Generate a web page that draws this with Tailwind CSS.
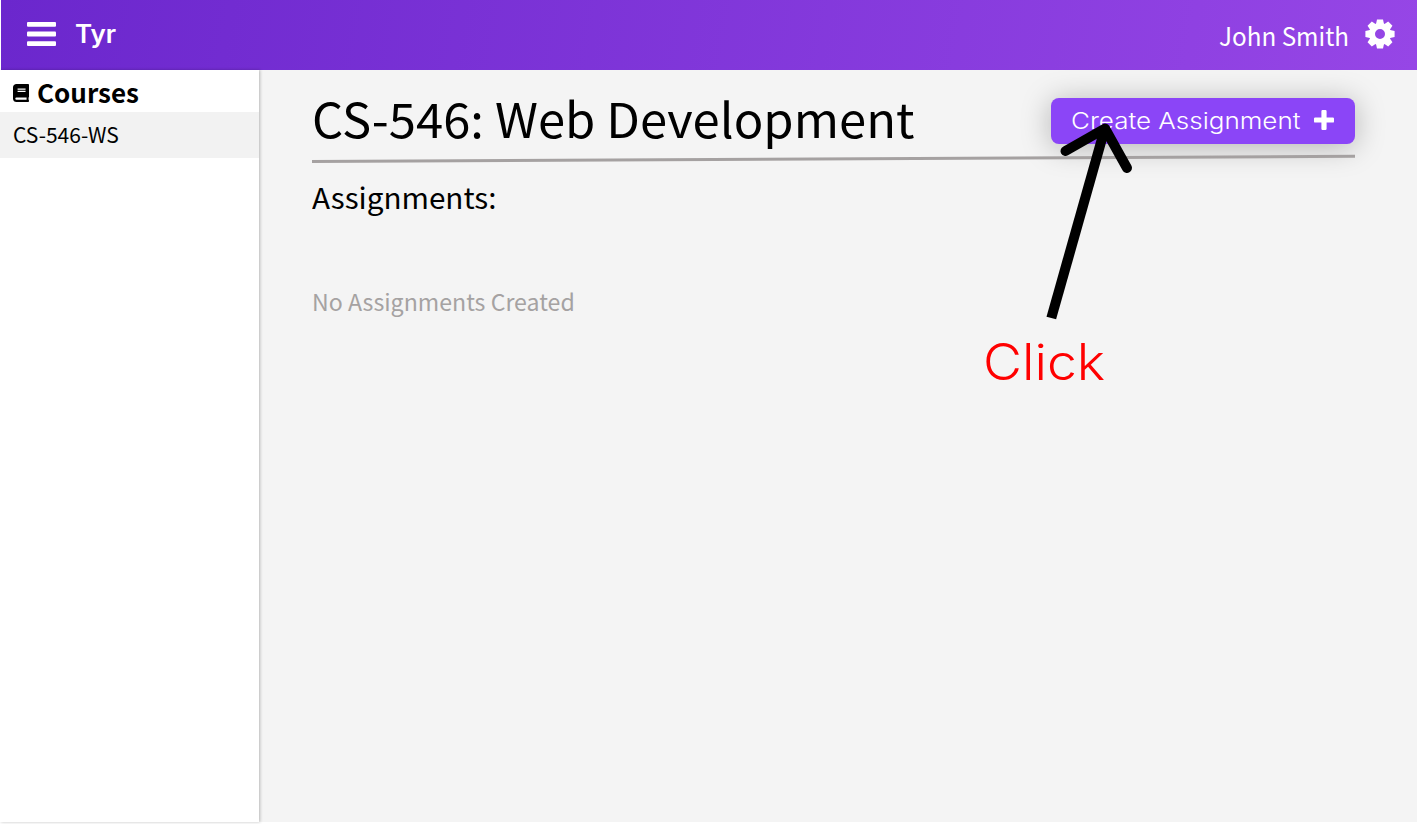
<!DOCTYPE html>
<html lang="en">
<head>
<meta charset="utf-8">
<title>Tyr</title>
<script src="https://cdn.jsdelivr.net/npm/@tailwindcss/browser@4"></script>
</head>
<body class="bg-white">
<div class="relative flex h-[824px] w-[1417px] flex-col overflow-hidden pb-[2px] font-['Noto_Sans_CJK_SC',sans-serif] text-black">
  <header class="relative z-10 ml-px flex h-[70px] shrink-0 items-start bg-linear-[100deg,#6b27cd,#9646e6] text-white">
    <svg class="mt-[22px] ml-[26px] h-6 w-[29px] shrink-0" viewBox="0 0 29 24" fill="currentColor"><rect width="29" height="4.8" rx="1"/><rect y="9.6" width="29" height="4.8" rx="1"/><rect y="19.2" width="29" height="4.8" rx="1"/></svg>
    <span class="mt-[20px] ml-[19px] origin-left scale-x-[1.04] font-['Inter',sans-serif] text-[25px] leading-[28px] font-semibold whitespace-nowrap">Tyr</span>
    <span class="mt-[20px] mr-[16px] ml-auto origin-right scale-x-[0.97] text-[25px] leading-[30px] whitespace-nowrap">John Smith</span>
    <svg class="mt-[19px] mr-[22px] h-[30px] w-[30px] shrink-0" viewBox="-15 -15 30 30" fill="currentColor">
      <circle r="8" fill="none" stroke="currentColor" stroke-width="6"/>
      <path id="tooth" d="M-4.200-9L-3-14.600H3L4.200-9z"/>
      <use href="#tooth" transform="rotate(45)"/><use href="#tooth" transform="rotate(90)"/><use href="#tooth" transform="rotate(135)"/><use href="#tooth" transform="rotate(180)"/><use href="#tooth" transform="rotate(225)"/><use href="#tooth" transform="rotate(270)"/><use href="#tooth" transform="rotate(315)"/>
    </svg>
  </header>
  <div class="flex min-h-0 grow">
    <aside class="relative z-10 w-[259px] shrink-0 bg-white shadow-[1px_0_3px_rgba(0,0,0,0.25)]">
      <div class="flex h-[42px] items-start pl-[13px]">
        <svg class="mt-[14px] h-[18px] w-4 shrink-0" viewBox="0 0 448 512" preserveAspectRatio="none"><path d="M448 360V24c0-13-11-24-24-24H96C43 0 0 43 0 96v320c0 53 43 96 96 96h328c13 0 24-11 24-24v-16c0-8-3-14-9-19-4-15-4-59 0-74 6-4 9-11 9-19zM128 134c0-3 3-6 6-6h212c3 0 6 3 6 6v20c0 3-3 6-6 6H134c-3 0-6-3-6-6zm0 64c0-3 3-6 6-6h212c3 0 6 3 6 6v20c0 3-3 6-6 6H134c-3 0-6-3-6-6zm253 250H96a32 32 0 0 1 0-64h285c-2 17-2 47 0 64z"/></svg>
        <h2 class="mt-[7px] ml-[8px] text-[26px] leading-[30px] font-semibold whitespace-nowrap">Courses</h2>
      </div>
      <div class="flex h-[46px] items-start bg-[#f2f2f2] pt-[8px] pl-[13px] text-[21px] leading-[28px]"><span class="whitespace-nowrap">CS-546-WS</span></div>
    </aside>
    <main class="flex grow flex-col bg-[#f4f4f4] pr-[62px] pl-[53px]">
      <div class="flex h-[84px] items-start">
        <h1 class="mt-[17px] origin-left scale-x-[1.02] text-[48px] leading-[60px] whitespace-nowrap">CS-546: Web Development</h1>
        <button class="mt-[28px] ml-auto flex h-[46px] w-[304px] shrink-0 items-center rounded-lg bg-[#8b45f7] pl-5 text-white shadow-[0_3px_30px_rgba(0,0,0,0.27)]">
          <span class="origin-left scale-x-[1.13] font-['Inter',sans-serif] text-[23px] leading-[30px] font-light whitespace-nowrap">Create Assignment</span>
          <svg class="mr-[21px] mb-[2px] ml-auto h-[20px] w-[20px] shrink-0" viewBox="0 0 20 20" fill="currentColor"><path d="M8.6 0h2.8q1.2 0 1.2 1.2v6.2h6.2q1.2 0 1.2 1.2v2.8q0 1.2-1.2 1.2h-6.2v6.2q0 1.2-1.2 1.2H8.6q-1.2 0-1.2-1.2v-6.2H1.2Q0 12.600 0 11.400V8.600q0-1.200 1.200-1.200h6.200V1.200Q7.400 0 8.600 0z"/></svg>
        </button>
      </div>
      <svg class="h-[9px] w-[1043px] shrink-0" viewBox="0 0 1043 9"><path d="M0 7.500L1043 2.300" stroke="#a5a1a1" stroke-width="3"/></svg>
      <h2 class="mt-[13px] h-[40px] origin-left scale-x-[1.022] self-start text-[29px] leading-[40px] whitespace-nowrap">Assignments:</h2>
      <p class="mt-[69px] h-[32px] origin-left scale-x-[1.006] self-start text-[23px] leading-[32px] whitespace-nowrap text-[#a5a2a2]">No Assignments Created</p>
    </main>
  </div>
  <svg class="pointer-events-none absolute top-[115px] left-[1040px] z-20 h-[210px] w-[110px]" viewBox="1040 115 110 210" fill="none" stroke="#000" stroke-width="10"><path d="M1051.300 318L1105 128"/><path d="M1065.500 151L1105 128.500L1127 168" stroke-linecap="round" stroke-linejoin="round"/></svg>
  <span class="absolute top-[332px] left-[983px] z-20 origin-left scale-x-[1.07] font-['Inter',sans-serif] text-[50px] leading-[60px] font-light whitespace-nowrap text-[#ff0000]">Click</span>
</div>
</body>
</html>
